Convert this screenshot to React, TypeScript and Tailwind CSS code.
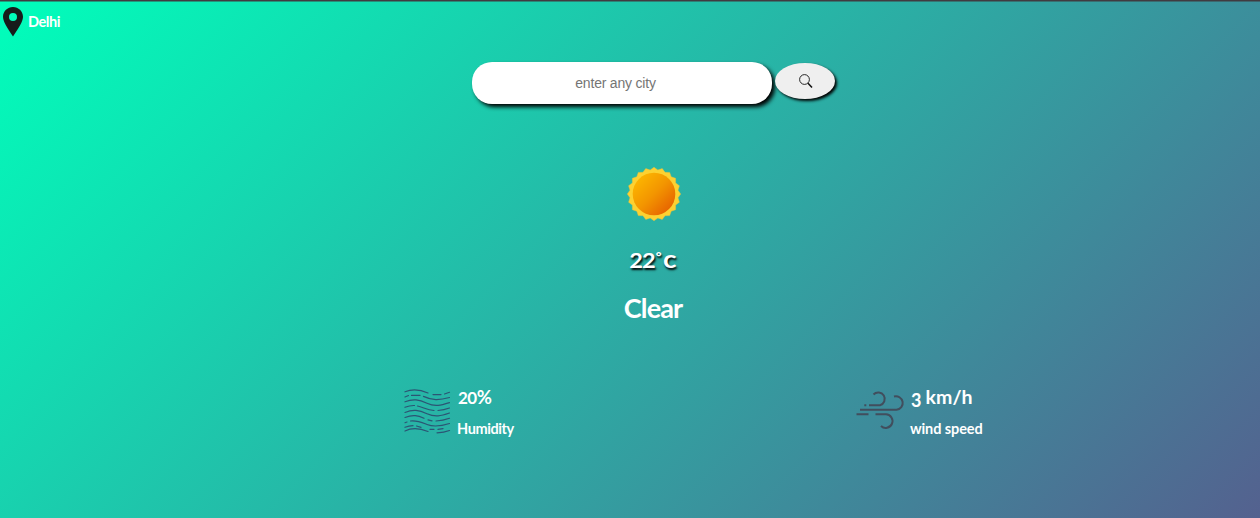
import React from "react";

const rays = Array.from({ length: 40 }, (_, i) => {
  const r = i % 2 === 0 ? 26.7 : 24.3;
  const a = (i * Math.PI) / 20 - Math.PI / 2;
  return `${(27 + r * Math.cos(a)).toFixed(2)},${(27 + r * Math.sin(a)).toFixed(2)}`;
}).join(" ");

function Pin() {
  return (
    <svg width="20" height="30" viewBox="0 0 20 30" fill="#171c1b" fillRule="evenodd">
      <path d="M10 0C4.5 0 0 4.400 0 9.800 0 14.500 4 20.500 10 29.500 16 20.500 20 14.500 20 9.800 20 4.400 15.500 0 10 0ZM10 6a4 4 0 1 1 0 8 4 4 0 0 1 0-8Z" />
    </svg>
  );
}

function Sun() {
  return (
    <svg width="54" height="54" viewBox="0 0 54 54">
      <defs>
        <linearGradient id="core" x1="0" y1="0" x2="1" y2="1">
          <stop offset="0.1" stopColor="#fdb700" />
          <stop offset="0.5" stopColor="#f39500" />
          <stop offset="0.9" stopColor="#e66000" />
        </linearGradient>
      </defs>
      <polygon points={rays} fill="#fdd131" stroke="#e4c33f" strokeWidth="0.5" />
      <circle cx="27" cy="27" r="21.300" fill="url(#core)" />
    </svg>
  );
}

function Waves() {
  return (
    <svg width="48" height="46" viewBox="0 0 48 46" fill="none" stroke="#2c5574" strokeWidth="1.200" strokeLinecap="round">
      <path d="M2 2.800C10 -0.500 17 0.500 25 4M30 5.600H38M41.500 5L46.500 3.300" />
      <path d="M2 8L5.500 6.500M8.500 6.400H17M20.500 7.400C29 11.500 36 11.500 46.500 8.500" />
      <path d="M2 12.800C10 9.500 16 10.500 24 14.300S38 16.300 46.500 13.600" />
      <path d="M2 18.300Q7 16.300 11.500 16.500M14.500 17C20 18 24 21.200 31 21.500M35 21.500Q41 21 46.500 19" />
      <path d="M2 23.500C10 20 16 21 24 24.700S38 27 46.500 24" />
      <path d="M2 28.500C10 25.200 15 26.500 21 29.300M25 30.800L29 31.800M33 32Q40 31.700 46.500 29.300" />
      <path d="M2 33.700L4 33M7.500 32C14 31.200 19 33.500 24 35.500S38 37.200 46.500 34.500" />
      <path d="M2 38.300Q6 36.700 10 36.700M13.500 37L18 38.300M27 40.300H31M35 40.300L40 39.600" />
      <path d="M2 42C9 38.500 17 39.300 25 42.500M34 43.800Q41 43.600 46.500 41.500" />
    </svg>
  );
}

function Wind() {
  return (
    <svg width="49" height="42" viewBox="0 0 49 42" fill="none" stroke="#414e5d" strokeWidth="2">
      <path d="M4 19.800H40.500A6.800 6.800 0 1 0 38 6.500" />
      <path d="M13 15.200H24A6.500 6.500 0 1 0 17.500 4.500" />
      <path d="M19.500 24.300H30A6.800 6.800 0 1 1 25 36" />
      <path d="M0.500 24.300H12.500M8.300 15.200H10.300" />
    </svg>
  );
}

export default function App() {
  return (
    <main className="flex h-[518px] w-full flex-col overflow-hidden bg-[linear-gradient(135deg,#00ffbb_0%,#54618f_100%)] font-['Lato',sans-serif] font-bold text-white">
      <div className="h-px shrink-0 bg-[#403b40]" />
      <div className="h-px shrink-0 bg-[#403b40]/50" />
      <header className="flex h-[38px] items-start pl-[3px] pt-[5px]">
        <Pin />
        <span className="ml-[5px] mt-[5px] text-[14.500px] leading-5 tracking-[-0.45px]">Delhi</span>
      </header>

      <form className="ml-[472px] mt-[22px] flex h-[42px] items-start gap-[3px]" onSubmit={(e) => e.preventDefault()}>
        <input
          aria-label="City"
          placeholder="enter any city"
          className="h-[42px] w-[300px] rounded-[20px] bg-white pr-[13px] text-center font-['Liberation_Sans',sans-serif] text-[14px] font-normal tracking-[-0.2px] text-gray-800 shadow-[3px_3px_4px_#000] outline-none placeholder:text-[#757575]"
        />
        <button aria-label="Search" className="mt-px flex h-9 w-[60px] items-center justify-center rounded-[50%] bg-[#efefef] pl-px shadow-[2px_2px_3px_#000]">
          <svg width="14" height="15" viewBox="0 0 14 15" fill="none" stroke="#111">
            <circle cx="5.500" cy="5.500" r="4.900" strokeWidth="0.900" />
            <path d="M9 9.200L13 13.600" strokeWidth="1.500" />
          </svg>
        </button>
      </form>

      <section className="ml-[554px] mt-[63px] flex w-[200px] flex-col items-center">
        <Sun />
        <div className="mt-[21px] mr-px flex h-8 items-baseline leading-8 [text-shadow:1px_2px_2px_#000]">
          <span className="mr-px origin-right scale-x-[1.12] text-[21px] leading-8 tracking-[-0.8px]">22</span>
          <span className="relative -top-[7px] mr-px w-[6px] text-[14px] font-black leading-8">°</span>
          <span className="origin-left scale-x-[1.12] text-[25px] leading-8">c</span>
        </div>
        <div className="mt-[16px] mr-[2px] text-[27px] leading-9 tracking-[-0.9px]">Clear</div>
      </section>

      <section className="ml-[403px] mt-[60px] flex">
        <div className="flex w-[453px] items-start">
          <div className="mt-[3px]"><Waves /></div>
          <div className="ml-[6px] mt-px">
            <div className="flex h-5 items-baseline pl-px leading-5"><span className="text-[17px] tracking-[-0.5px]">20</span><span className="text-[18.500px]">%</span></div>
            <div className="mt-[12px] text-[14.500px] leading-5 tracking-[-0.4px]">Humidity</div>
          </div>
        </div>
        <div className="flex items-start">
          <div className="mt-1"><Wind /></div>
          <div className="ml-[5px] mt-px">
            <div className="flex h-5 items-baseline pl-px text-[19.500px] leading-5"><span className="relative top-[3px] mr-[4px] text-[18px]">3</span><span className="tracking-[0.1px]">km/h</span></div>
            <div className="mt-[12px] whitespace-nowrap text-[14.500px] leading-5 tracking-[-0.1px]">wind speed</div>
          </div>
        </div>
      </section>
    </main>
  );
}
